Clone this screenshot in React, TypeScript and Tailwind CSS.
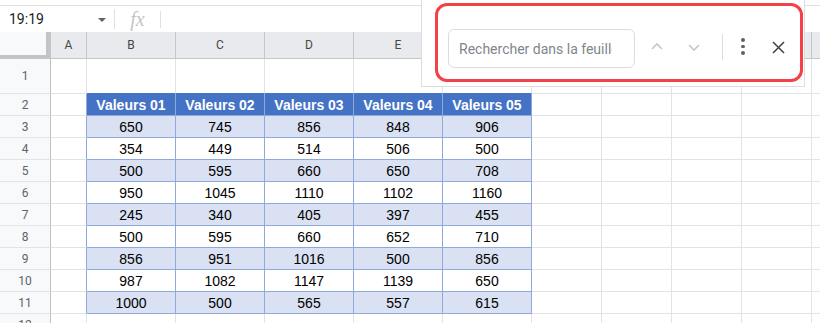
import React from "react";

const cols = [
  { name: "A", w: "w-[36px]" },
  { name: "B", w: "w-[89px]" },
  { name: "C", w: "w-[89px]" },
  { name: "D", w: "w-[89px]" },
  { name: "E", w: "w-[89px]" },
  { name: "F", w: "w-[89px]" },
  { name: "G", w: "w-[70px]" },
  { name: "H", w: "w-[70px]" },
  { name: "I", w: "w-[70px]" },
  { name: "J", w: "w-[70px]" },
  { name: "", w: "w-[70px]" },
];

const headers = ["Valeurs 01", "Valeurs 02", "Valeurs 03", "Valeurs 04", "Valeurs 05"];

const data = [
  [650, 745, 856, 848, 906],
  [354, 449, 514, 506, 500],
  [500, 595, 660, 650, 708],
  [950, 1045, 1110, 1102, 1160],
  [245, 340, 405, 397, 455],
  [500, 595, 660, 652, 710],
  [856, 951, 1016, 500, 856],
  [987, 1082, 1147, 1139, 650],
  [1000, 500, 565, 557, 615],
];

function RowHead({ n, h }: { n: number; h: string }) {
  return (
    <div
      className={`w-[51px] ${h} shrink-0 bg-[#f8f9fa] border-r border-b border-r-[#c0c0c0] border-b-[#e2e3e3] flex items-center justify-center text-[12px] text-[#5f6368]`}
    >
      {n}
    </div>
  );
}

function Row({ n, cells }: { n: number; cells?: React.ReactNode[] }) {
  // n: row number, cells: content for B..F (or undefined for empty rows)
  const inTable = n >= 2 && n <= 11;
  return (
    <div className="flex h-[22px]">
      <RowHead n={n} h="h-[22px]" />
      {cols.map((c, i) => {
        const tableCol = i >= 1 && i <= 5;
        let cls = "border-r border-b border-[#e2e3e3] bg-white";
        let content: React.ReactNode = null;
        if (inTable && tableCol) {
          if (n === 2) {
            cls = "border-r border-b border-[#8ea9db] bg-[#4472c4] text-white font-bold";
          } else {
            cls = `border-r border-b border-[#8ea9db] text-black ${n % 2 === 1 ? "bg-[#d9e1f2]" : "bg-white"}`;
          }
          content = cells ? cells[i - 1] : null;
        } else if (inTable && i === 0) {
          cls = "border-b border-r border-b-[#e2e3e3] border-r-[#8ea9db] bg-white";
        }
        return (
          <div
            key={i}
            className={`${c.w} h-[22px] shrink-0 flex items-center justify-center pt-px text-[14px] font-['Liberation_Sans',Arial,sans-serif] ${cls}`}
          >
            {content}
          </div>
        );
      })}
    </div>
  );
}

export default function App() {
  return (
    <div className="relative w-[820px] h-[323px] overflow-hidden bg-white font-['Roboto',sans-serif]">
      {/* formula bar */}
      <div className="pt-[5px]">
        <div className="h-[27px] border-t border-[#e0e0e0] flex items-center">
          <div className="w-[114px] h-full flex items-center pl-[9px] pr-[8px] text-[14px] text-[#202124]">
            <span className="flex-1">19:19</span>
            <svg width="8" height="4" viewBox="0 0 8 4" className="mt-[2px]">
              <path d="M0 0 L8 0 L4 4 Z" fill="#5f6368" />
            </svg>
          </div>
          <div className="w-px h-[20px] bg-[#e0e0e0]" />
          <div className="w-[45px] text-center text-[20px] italic text-[#c4c4c4] font-['Liberation_Serif',serif] leading-none">
            fx
          </div>
          <div className="w-px h-[17px] bg-[#e0e0e0]" />
        </div>
      </div>

      {/* column headers */}
      <div className="flex h-[27px]">
        <div className="w-[51px] h-[27px] shrink-0 bg-[#f8f9fa] border-r-[5px] border-b-[4px] border-[#c4c4c4]" />
        {cols.map((c, i) => (
          <div
            key={i}
            className={`${c.w} h-[27px] shrink-0 bg-[#e8eaed] border-r border-b border-[#c4c7c5] flex items-center justify-center text-[12px] text-[#444746]`}
          >
            {c.name}
          </div>
        ))}
      </div>

      {/* row 1 */}
      <div className="flex h-[35px]">
        <RowHead n={1} h="h-[35px]" />
        {cols.map((c, i) => (
          <div
            key={i}
            className={`${c.w} h-[35px] shrink-0 border-r border-b border-r-[#e2e3e3] ${
              i >= 1 && i <= 5 ? "border-b-[#4472c4]" : "border-b-[#e2e3e3]"
            }`}
          />
        ))}
      </div>

      <Row n={2} cells={headers} />
      {data.map((r, idx) => (
        <Row key={idx} n={idx + 3} cells={r.map(String)} />
      ))}
      <Row n={12} />

      {/* find panel */}
      <div className="absolute left-[421px] top-[-1px] w-[384px] h-[88px] bg-white border border-[#dadce0]">
        <div className="flex items-center mt-[29px] h-[39px]">
          <input
            readOnly
            placeholder="Rechercher dans la feuille"
            className="ml-[26px] w-[187px] h-[39px] rounded-[6px] border border-[#dadce0] pl-[10px] pr-[22px] text-[14px] text-[#202124] placeholder:text-[#80868b] outline-none font-['Roboto',sans-serif]"
          />
          <div className="ml-[10px] w-[24px] h-[24px] flex items-center justify-center -mt-[4px]">
            <svg width="12" height="7" viewBox="0 0 12 7" fill="none">
              <path d="M1 6 L6 1 L11 6" stroke="#c4c7c5" strokeWidth="1.6" />
            </svg>
          </div>
          <div className="ml-[13px] w-[24px] h-[24px] flex items-center justify-center -mt-[2px]">
            <svg width="12" height="7" viewBox="0 0 12 7" fill="none">
              <path d="M1 1 L6 6 L11 1" stroke="#c4c7c5" strokeWidth="1.6" />
            </svg>
          </div>
          <div className="ml-[16px] w-px h-[26px] bg-[#dadce0] -mt-[4px]" />
          <div className="ml-[10px] w-[20px] h-[20px] flex flex-col items-center justify-center gap-[3px] -mt-[4px]">
            <span className="w-[3.5px] h-[3.5px] rounded-full bg-[#5f6368]" />
            <span className="w-[3.5px] h-[3.5px] rounded-full bg-[#5f6368]" />
            <span className="w-[3.5px] h-[3.5px] rounded-full bg-[#5f6368]" />
          </div>
          <div className="ml-[13px] w-[24px] h-[24px] flex items-center justify-center -mt-[3px]">
            <svg width="13" height="13" viewBox="0 0 13 13" fill="none">
              <path d="M1 1 L12 12 M12 1 L1 12" stroke="#444746" strokeWidth="1.6" />
            </svg>
          </div>
        </div>
      </div>

      {/* red highlight annotation */}
      <div className="absolute left-[435px] top-[3px] w-[368px] h-[79px] rounded-[12px] border-[3px] border-[#f44147]" />
    </div>
  );
}
